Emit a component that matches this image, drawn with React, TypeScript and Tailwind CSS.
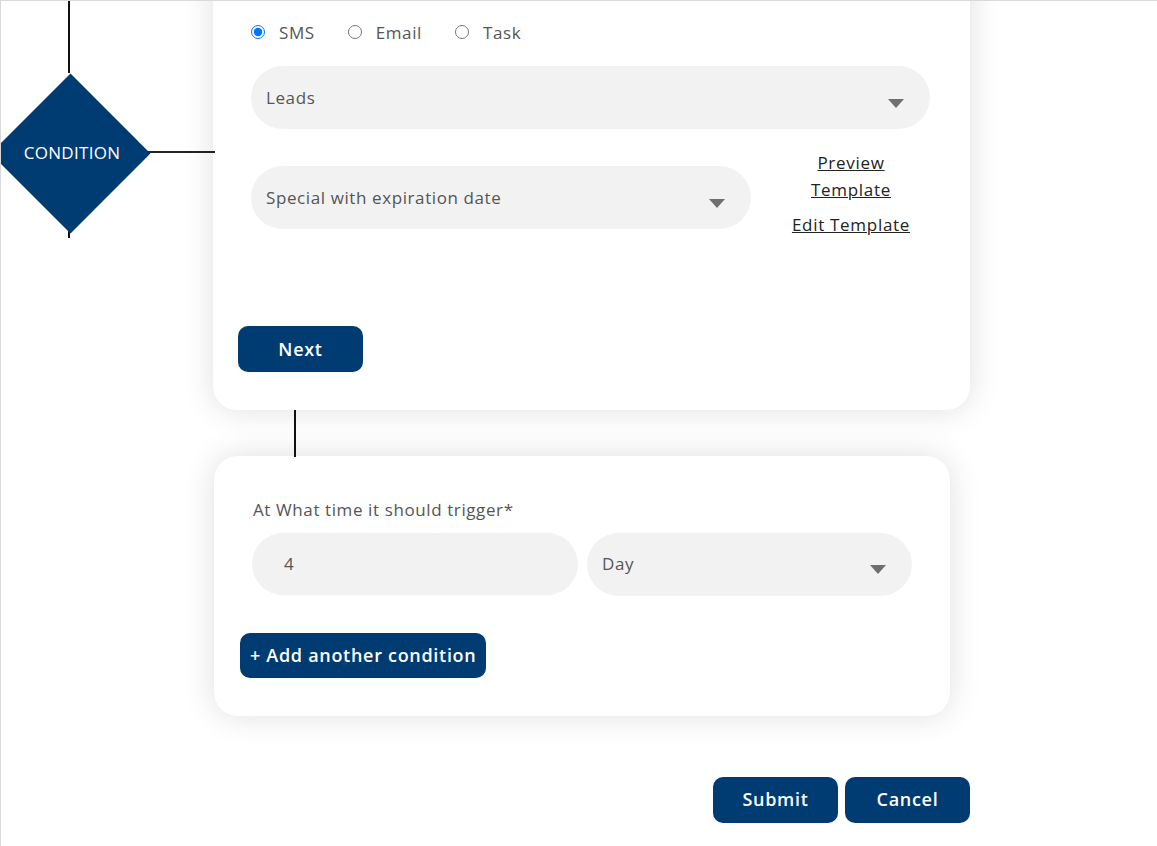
import React from 'react';

const navyBtn =
  'bg-[#003b71] text-white font-semibold text-[18px] tracking-[0.7px] rounded-[10px] flex items-center justify-center';

const bodyText = 'text-[17px] tracking-[0.6px] text-[#555]';

function Caret() {
  return (
    <svg width="16" height="9" viewBox="0 0 16 9" className="shrink-0">
      <path d="M0 0 H16 L8 9 Z" fill="#6f6f6f" />
    </svg>
  );
}

function Select({ label, className }: { label: string; className: string }) {
  return (
    <div className={`h-[63px] rounded-full bg-[#f2f2f2] flex items-center justify-between pl-[15px] pr-[26px] ${className}`}>
      <span className={bodyText}>{label}</span>
      <span className="mt-[11px]"><Caret /></span>
    </div>
  );
}

export default function App() {
  const channels = ['SMS', 'Email', 'Task'];

  return (
    <div
      className="relative h-[846px] w-[1157px] overflow-hidden bg-white border-t border-l border-[#d9d9d9]"
      style={{ fontFamily: '"Open Sans", "Noto Sans", sans-serif' }}
    >
      {/* diagram: condition node + connectors */}
      <div className="absolute left-[67px] top-0 h-[72px] w-[2px] bg-[#111]" />
      <div className="absolute left-[67px] top-[228px] h-[9px] w-[2px] bg-[#111]" />
      <div className="absolute left-[146px] top-[150px] h-[2px] w-[68px] bg-[#222]" />
      <div className="absolute left-[-11px] top-[72px] h-[160px] w-[160px] flex items-center justify-center">
        <div className="absolute h-[113px] w-[113px] rotate-45 bg-[#003b71]" />
        <span className="relative text-white text-[17px] tracking-[0.3px] ml-[4px]">CONDITION</span>
      </div>
      <div className="absolute left-[293px] top-[409px] h-[47px] w-[2px] bg-[#111]" />

      <div className="ml-[212px] w-[757px] -mt-[42px] flex flex-col">
        {/* message card */}
        <div className="rounded-[24px] bg-white shadow-[0_0_32px_rgba(0,0,0,0.13)] pt-[64px] pb-[38px] px-[38px]">
          <div className="flex items-center gap-[33px] h-[18px]">
            {channels.map((c, i) => (
              <label key={c} className={`flex items-center gap-[14px] ${bodyText} leading-none`}>
                <input type="radio" name="channel" defaultChecked={i === 0} className="m-0 h-[14px] w-[14px]" />
                <span>{c}</span>
              </label>
            ))}
          </div>

          <Select label="Leads" className="mt-[25px] w-[679px]" />

          <div className="mt-[37px] flex items-start h-[63px]">
            <Select label="Special with expiration date" className="w-[500px] shrink-0" />
            <div className="ml-[40px] w-[120px] -mt-[17px] flex flex-col items-center text-[17px] tracking-[0.7px] text-[#222] leading-[27px]">
              <a className="underline text-center">Preview<br />Template</a>
              <a className="underline mt-[8px] whitespace-nowrap">Edit Template</a>
            </div>
          </div>

          <button className={`${navyBtn} mt-[97px] -ml-[13px] h-[46px] w-[125px]`}>Next</button>
        </div>

        {/* trigger card */}
        <div className="mt-[46px] ml-[1px] w-[736px] rounded-[24px] bg-white shadow-[0_0_32px_rgba(0,0,0,0.13)] pt-[41px] pb-[38px] pl-[26px] pr-[38px]">
          <div className={`ml-[13px] ${bodyText}`}>At What time it should trigger*</div>
          <div className="mt-[10px] ml-[12px] flex gap-[9px]">
            <div className={`h-[62px] w-[326px] rounded-full bg-[#f2f2f2] flex items-center pl-[32px] ${bodyText}`}>4</div>
            <Select label="Day" className="h-[62px] w-[325px]" />
          </div>
          <button className={`${navyBtn} mt-[37px] h-[45px] px-[10px] rounded-[8px]`}>+ Add another condition</button>
        </div>

        <div className="mt-[61px] flex justify-end gap-[7px]">
          <button className={`${navyBtn} h-[46px] w-[125px]`}>Submit</button>
          <button className={`${navyBtn} h-[46px] w-[125px]`}>Cancel</button>
        </div>
      </div>
    </div>
  );
}
